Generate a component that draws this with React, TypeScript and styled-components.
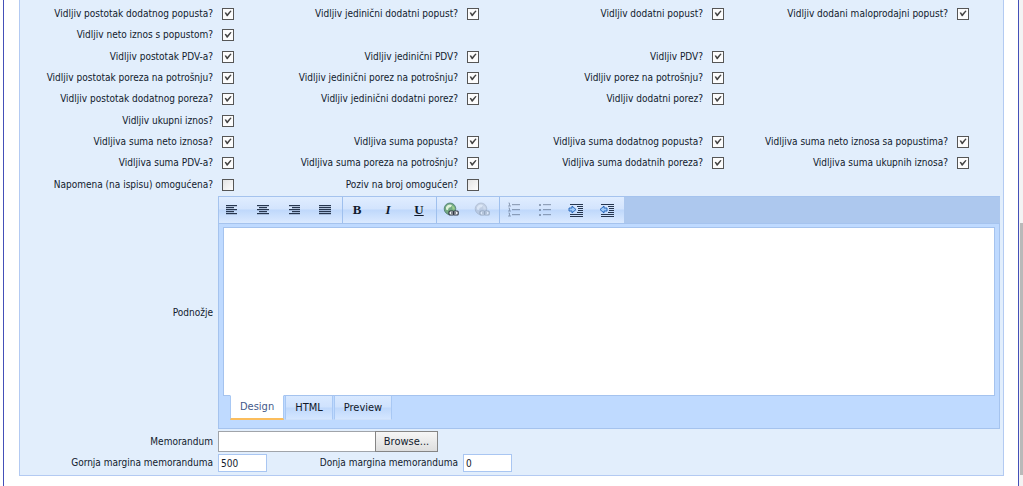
import React from "react";
import styled, { createGlobalStyle } from "styled-components";

const GlobalStyle = createGlobalStyle`
  * { box-sizing: border-box; }
  body {
    margin: 0;
    background: #fff;
    color: #111a2c;
    font: 10px/14px "DejaVu Sans Condensed", "DejaVu Sans", Tahoma, sans-serif;
  }
  button, input, textarea { font: inherit; color: inherit; }
`;

const Page = styled.div`
  display: flex;
  min-height: 100vh;
`;

const Frame = styled.main`
  flex: 1;
  min-width: 0;
  margin-left: 3px;
  padding: 0 14px 10px 15px;
  border: solid #4450b8;
  border-width: 0 1px;
`;

const ScrollTrack = styled.div`
  width: 4px;
  padding: 223px 0 11px 1px;
  display: flex;
  background: #f3f3f3;
`;

const ScrollThumb = styled.div`
  flex: 1;
  background: #b9b9b9;
`;

const Panel = styled.form`
  padding: 3px 3px 1px 0;
  background: #e2eefc;
  border: 1px solid #b3caf2;
  border-top: 0;
`;

const Options = styled.div`
  display: grid;
  grid-template-columns: repeat(4, 1fr);
  grid-auto-rows: 21px 22px 21px;
  margin-bottom: 1px;
`;

const Option = styled.label<{ $column: number; $row: number }>`
  grid-column: ${(p) => p.$column};
  grid-row: ${(p) => p.$row};
  display: flex;
  align-items: center;
  justify-content: flex-end;
  gap: 9px;
  padding-right: 31px;
  white-space: nowrap;
`;

const Checkbox = styled.input`
  appearance: none;
  flex: none;
  width: 12px;
  height: 12px;
  margin: 0;
  border: 1px solid #565656;
  background: linear-gradient(135deg, #e4e4e4, #fdfdfd);
  &:checked { background: #fcfcfc; }
  &:checked::before {
    content: "";
    display: block;
    height: 10px;
    background: #444;
    clip-path: polygon(16% 42%, 30% 38%, 42% 56%, 74% 20%, 86% 24%, 46% 78%, 38% 78%);
  }
`;

const FieldRow = styled.div`
  display: grid;
  grid-template-columns: calc(25% - 52px) 1fr;
  column-gap: 5px;
  align-items: center;
  margin-bottom: 2px;
`;

const MarginRow = styled(FieldRow)`
  grid-template-columns: calc(25% - 52px) 49px calc(25% - 59px) 49px;
`;

const FieldLabel = styled.label`
  text-align: right;
  white-space: nowrap;
`;

const Toolbar = styled.div`
  display: flex;
  height: 28px;
  border: solid #a5c3ee;
  border-width: 1px 0;
  background: #adc8ee;
`;

const ToolGroup = styled.div`
  display: flex;
  background: linear-gradient(#e0edff 0, #d3e4fd 46%, #bfd8fb 50%, #dbeaff 100%);
  border-right: 1px solid #9fc0ee;
  &:first-child { box-shadow: inset 1px 0 #a5c3ee; }
  &:last-child { border-right: 0; }
`;

const ToolButton = styled.button`
  display: flex;
  align-items: center;
  justify-content: center;
  width: 31px;
  padding: 0 3px 0 0;
  border: 0;
  background: none;
`;

const EditorBody = styled.div`
  padding: 3px 4px 8px;
  border: 1px solid #a5c3ee;
  border-top: 0;
  background: #bfdaff;
`;

const EditorText = styled.textarea`
  display: block;
  width: 100%;
  height: 169px;
  padding: 4px;
  border: 1px solid #a5c3ee;
  background: #fff;
  resize: none;
  outline: 0;
`;

const Tabs = styled.div`
  display: flex;
  gap: 1px;
  margin: -1px 0 0 7px;
`;

const Tab = styled.button<{ $active?: boolean }>`
  position: relative;
  height: 25px;
  padding: 0 9px;
  font-size: 11px;
  line-height: 16px;
  border: 1px solid #a8c8f4;
  border-bottom: ${(p) => (p.$active ? "2px solid #fbbd5c" : "1px solid #cfe1fa")};
  border-top-color: ${(p) => (p.$active ? "#fff" : "#a5c3ee")};
  color: ${(p) => (p.$active ? "#44598a" : "#101828")};
  background: ${(p) => (p.$active ? "#fff" : "linear-gradient(#d9e9ff 0, #cfe2fd 48%, #bfd8fb 52%, #d4e6ff 100%)")};
`;

const FilePicker = styled.div`
  display: flex;
`;

const FileName = styled.input`
  width: 157px;
  height: 21px;
  border: 1px solid #a0a4aa;
  border-right: 0;
  background: #fff;
`;

const BrowseButton = styled.button`
  height: 21px;
  width: 63px;
  padding: 0;
  font-size: 11px;
  line-height: 16px;
  border: 1px solid #858585;
  background: linear-gradient(#f6f6f6, #dedede);
`;

const NumberInput = styled.input`
  width: 49px;
  height: 18px;
  padding: 0 2px;
  border: 1px solid #a9c6f2;
  background: #fff;
`;

const options: [number, number, string, boolean?][] = [
  [1, 1, "Vidljiv postotak dodatnog popusta?"],
  [1, 2, "Vidljiv jedinični dodatni popust?"],
  [1, 3, "Vidljiv dodatni popust?"],
  [1, 4, "Vidljiv dodani maloprodajni popust?"],
  [2, 1, "Vidljiv neto iznos s popustom?"],
  [3, 1, "Vidljiv postotak PDV-a?"],
  [3, 2, "Vidljiv jedinični PDV?"],
  [3, 3, "Vidljiv PDV?"],
  [4, 1, "Vidljiv postotak poreza na potrošnju?"],
  [4, 2, "Vidljiv jedinični porez na potrošnju?"],
  [4, 3, "Vidljiv porez na potrošnju?"],
  [5, 1, "Vidljiv postotak dodatnog poreza?"],
  [5, 2, "Vidljiv jedinični dodatni porez?"],
  [5, 3, "Vidljiv dodatni porez?"],
  [6, 1, "Vidljiv ukupni iznos?"],
  [7, 1, "Vidljiva suma neto iznosa?"],
  [7, 2, "Vidljiva suma popusta?"],
  [7, 3, "Vidljiva suma dodatnog popusta?"],
  [7, 4, "Vidljiva suma neto iznosa sa popustima?"],
  [8, 1, "Vidljiva suma PDV-a?"],
  [8, 2, "Vidljiva suma poreza na potrošnju?"],
  [8, 3, "Vidljiva suma dodatnih poreza?"],
  [8, 4, "Vidljiva suma ukupnih iznosa?"],
  [9, 1, "Napomena (na ispisu) omogućena?", false],
  [9, 2, "Poziv na broj omogućen?", false],
];

const Icon = ({ children, faded }: { children: React.ReactNode; faded?: boolean }) => (
  <svg width="16" height="16" viewBox="0 0 16 16" opacity={faded ? 0.45 : 1} aria-hidden="true">
    {children}
  </svg>
);

const alignLines: Record<string, [number, number][]> = {
  left: [[2, 11], [2, 8], [2, 11], [2, 8], [2, 11]],
  center: [[2, 12], [4, 8], [2, 12], [4, 8], [2, 12]],
  right: [[3, 11], [6, 8], [3, 11], [6, 8], [3, 11]],
  justify: [[2, 12], [2, 12], [2, 12], [2, 12], [2, 12]],
};

const AlignIcon = ({ kind }: { kind: string }) => (
  <Icon>
    {alignLines[kind].map(([x, w], i) => (
      <rect key={i} x={x} y={3 + i * 2} width={w} height="1.2" fill="#26364f" />
    ))}
  </Icon>
);

const BoldIcon = styled.b`
  font: bold 13px/16px "Liberation Serif", serif;
`;
const ItalicIcon = styled.i`
  font: italic bold 13px/16px "Liberation Serif", serif;
`;
const UnderlineIcon = styled.u`
  font: bold 13px/16px "Liberation Serif", serif;
`;

const LinkIcon = ({ disabled }: { disabled?: boolean }) => {
  const line = disabled ? "#5c6878" : "#2c3440";
  return (
    <Icon faded={disabled}>
      <circle cx="7" cy="6.8" r="5.8" fill={disabled ? "#aab4c4" : "#72a982"} stroke={disabled ? "#7f8ca0" : "#4d7b70"} strokeWidth=".8" />
      <path d="M3 5q2.5-3.5 6-2l-1 2-2.2.8-1 2.4-1.8-.6z" fill={disabled ? "#e2e7ee" : "#dff2da"} />
      <path d="M9 3.5q3 1 2.8 4H9.5z" fill={disabled ? "#c9d0da" : "#9fd08e"} />
      <rect x="6" y="9" width="4.6" height="4" rx="1" fill="#f4f6f8" stroke={line} strokeWidth="1.1" />
      <rect x="10.6" y="9" width="4.6" height="4" rx="1" fill="#f4f6f8" stroke={line} strokeWidth="1.1" />
      <path d="M8 11h5" stroke={line} strokeWidth="1.1" />
    </Icon>
  );
};

const ListIcon = ({ ordered }: { ordered?: boolean }) => (
  <Icon faded>
    {[3, 8, 13].map((y) => (
      <g key={y}>
        {ordered ? (
          <path d={`M2.5 ${y - 2}h1v3M2 ${y + 1}h3`} fill="none" stroke="#3c4d68" />
        ) : (
          <rect x="2" y={y - 1} width="2" height="2" fill="#3c4d68" />
        )}
        <rect x="6" y={y - 1} width="8" height="1.2" fill="#3c4d68" />
      </g>
    ))}
  </Icon>
);

const IndentIcon = ({ out }: { out?: boolean }) => (
  <Icon>
    <path d="M2 2.5h13M9 4.5h6M10 6.5h5M10 8.5h5M9 10.5h6M2 12.5h13M2 14.5h13" stroke="#26364f" strokeWidth="1.2" />
    <path
      d={out ? "M1 7.5l4-3.5v2h3v3H5v2z" : "M8 7.5L4 4v2H1v3h3v2z"}
      fill="#9cc8f8"
      stroke="#1d5fb4"
      strokeWidth=".9"
    />
  </Icon>
);

const tools: [string, React.ReactNode][][] = [
  [
    ["Align left", <AlignIcon kind="left" />],
    ["Align center", <AlignIcon kind="center" />],
    ["Align right", <AlignIcon kind="right" />],
    ["Justify", <AlignIcon kind="justify" />],
  ],
  [
    ["Bold", <BoldIcon>B</BoldIcon>],
    ["Italic", <ItalicIcon>I</ItalicIcon>],
    ["Underline", <UnderlineIcon>U</UnderlineIcon>],
  ],
  [
    ["Insert link", <LinkIcon />],
    ["Remove link", <LinkIcon disabled />],
  ],
  [
    ["Numbered list", <ListIcon ordered />],
    ["Bulleted list", <ListIcon />],
    ["Indent", <IndentIcon />],
    ["Outdent", <IndentIcon out />],
  ],
];

export default function App() {
  return (
    <Page>
      <GlobalStyle />
      <Frame>
        <Panel onSubmit={(e) => e.preventDefault()}>
          <Options>
            {options.map(([row, column, text, checked = true]) => (
              <Option key={text} $row={row} $column={column}>
                {text}
                <Checkbox type="checkbox" defaultChecked={checked} />
              </Option>
            ))}
          </Options>
          <FieldRow>
            <FieldLabel htmlFor="footer">Podnožje</FieldLabel>
            <div>
              <Toolbar role="toolbar">
                {tools.map((group, i) => (
                  <ToolGroup key={i}>
                    {group.map(([name, icon]) => (
                      <ToolButton key={name} type="button" aria-label={name}>
                        {icon}
                      </ToolButton>
                    ))}
                  </ToolGroup>
                ))}
              </Toolbar>
              <EditorBody>
                <EditorText id="footer" />
                <Tabs>
                  <Tab type="button" $active>Design</Tab>
                  <Tab type="button">HTML</Tab>
                  <Tab type="button">Preview</Tab>
                </Tabs>
              </EditorBody>
            </div>
          </FieldRow>
          <FieldRow>
            <FieldLabel htmlFor="memo">Memorandum</FieldLabel>
            <FilePicker>
              <FileName id="memo" type="text" />
              <BrowseButton type="button">Browse...</BrowseButton>
            </FilePicker>
          </FieldRow>
          <MarginRow>
            <FieldLabel htmlFor="top-margin">Gornja margina memoranduma</FieldLabel>
            <NumberInput id="top-margin" type="text" defaultValue="500" />
            <FieldLabel htmlFor="bottom-margin">Donja margina memoranduma</FieldLabel>
            <NumberInput id="bottom-margin" type="text" defaultValue="0" />
          </MarginRow>
        </Panel>
      </Frame>
      <ScrollTrack>
        <ScrollThumb />
      </ScrollTrack>
    </Page>
  );
}
